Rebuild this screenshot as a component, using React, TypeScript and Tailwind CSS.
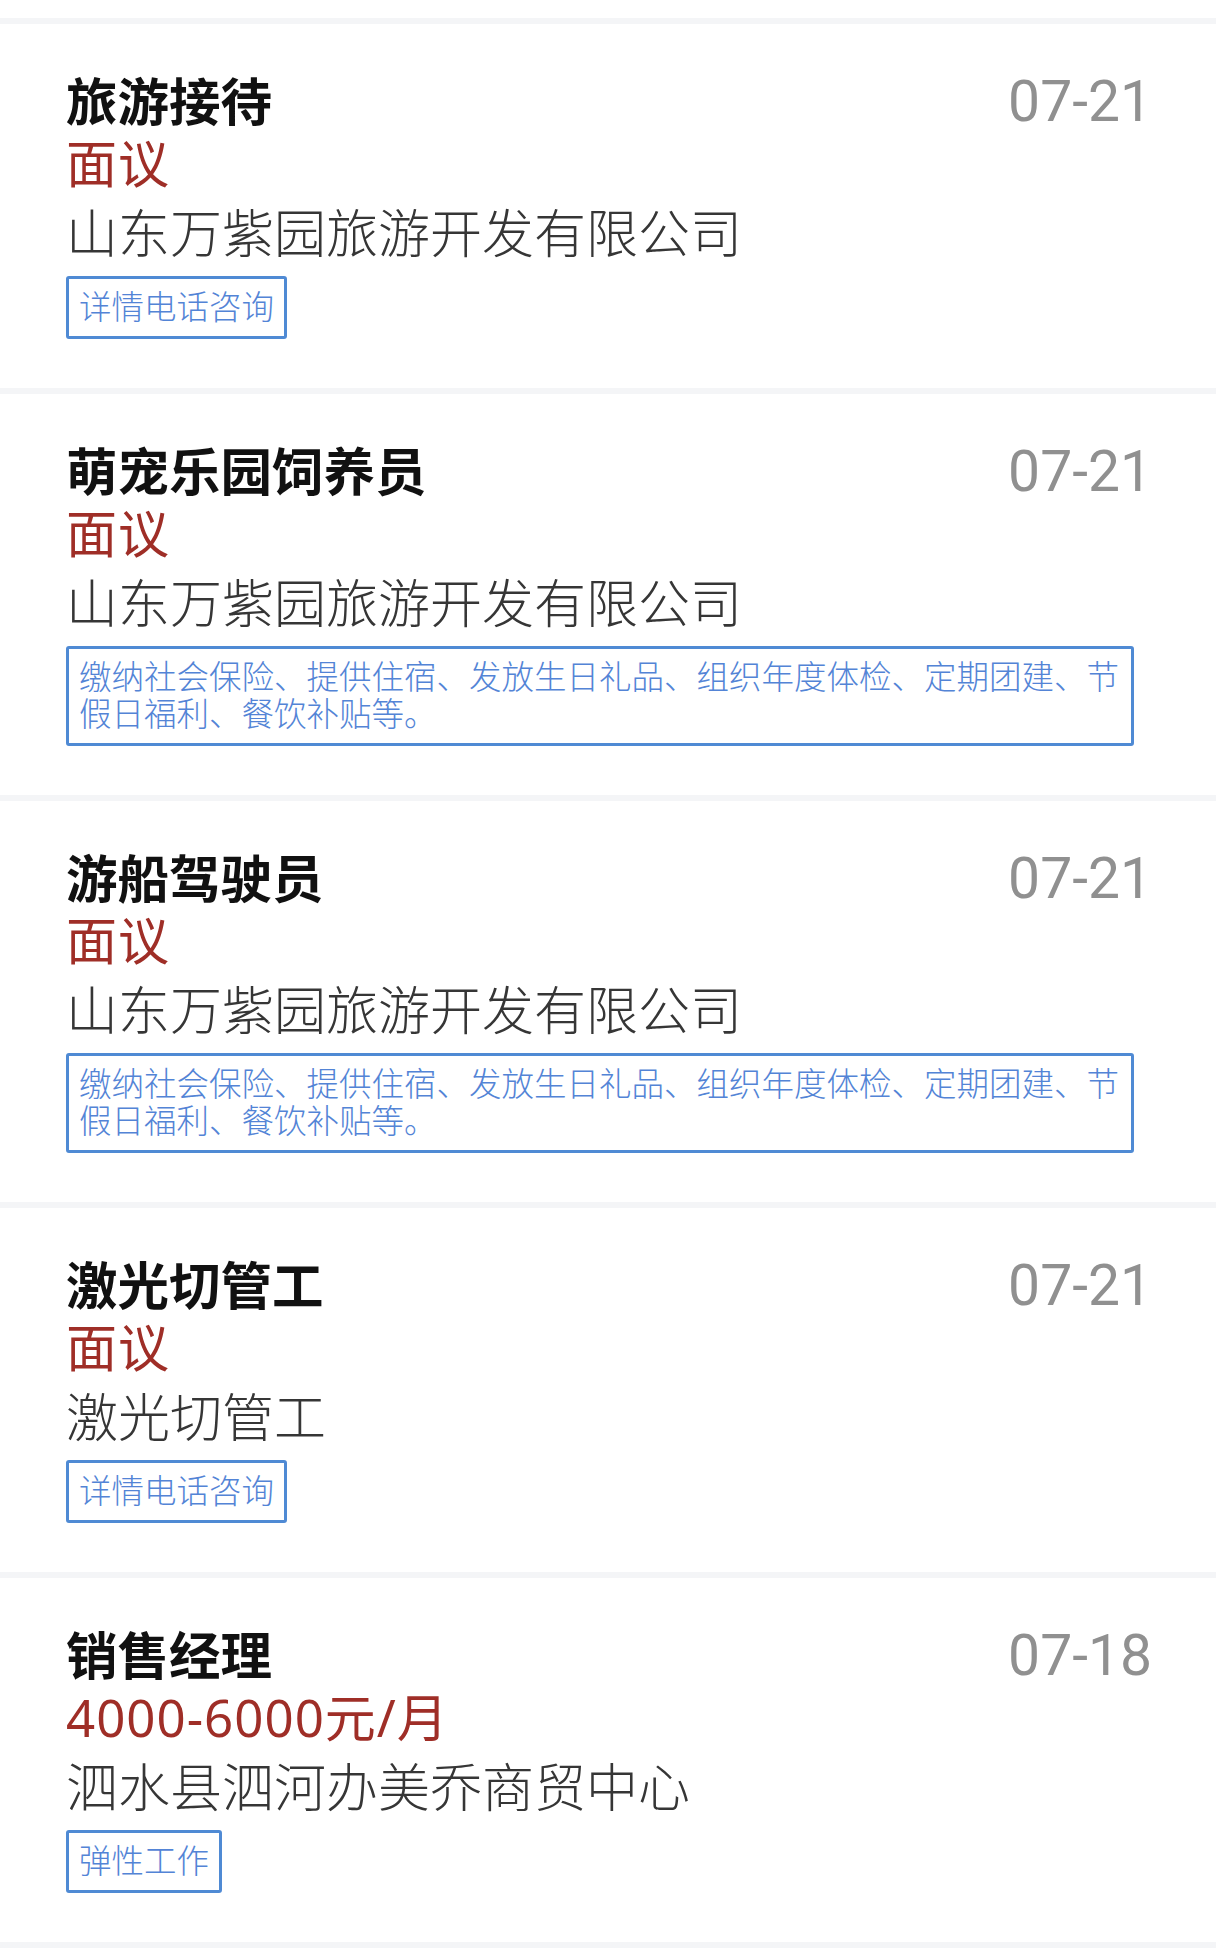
import React from 'react';

interface Job {
  id: number;
  title: string;
  salary: string;
  company: string;
  tag: string;
  date: string;
}

const jobs: Job[] = [
  { id: 1, title: '旅游接待', salary: '面议', company: '山东万紫园旅游开发有限公司', tag: '详情电话咨询', date: '07-21' },
  {
    id: 2,
    title: '萌宠乐园饲养员',
    salary: '面议',
    company: '山东万紫园旅游开发有限公司',
    tag: '缴纳社会保险、提供住宿、发放生日礼品、组织年度体检、定期团建、节假日福利、餐饮补贴等。',
    date: '07-21'
  },
  {
    id: 3,
    title: '游船驾驶员',
    salary: '面议',
    company: '山东万紫园旅游开发有限公司',
    tag: '缴纳社会保险、提供住宿、发放生日礼品、组织年度体检、定期团建、节假日福利、餐饮补贴等。',
    date: '07-21'
  },
  { id: 4, title: '激光切管工', salary: '面议', company: '激光切管工', tag: '详情电话咨询', date: '07-21' },
  { id: 5, title: '销售经理', salary: '4000-6000元/月', company: '泗水县泗河办美乔商贸中心', tag: '弹性工作', date: '07-18' }
];

const cjk = "font-['Noto_Sans','Noto_Sans_CJK_SC',sans-serif]";

const JobCard: React.FC<{ job: Job }> = ({ job }) => (
  <div className="border-t-[6px] border-[#f4f5f7] bg-white pl-[66px] pr-[64px] pt-[46px] pb-[49px]">
    <div className="flex justify-between items-start h-[62px]">
      <h3 className={`${cjk} text-[51.5px] leading-[62px] font-bold text-[#111]`}>{job.title}</h3>
      <span className="font-['Roboto',sans-serif] text-[57px] leading-[64px] text-[#909090]">{job.date}</span>
    </div>
    <div className={`${cjk} text-[51px] leading-[63px] tracking-[1px] text-[#9f2e27]`}>{job.salary}</div>
    <div className={`${cjk} text-[52px] leading-[75px] font-light text-[#363636]`}>{job.company}</div>
    <div className="mt-[6px]">
      <span
        className={`${cjk} inline-block max-w-[1068px] border-[3px] border-[#4f8ad4] rounded-[3px] px-[10px] pt-[9px] pb-[11px] text-[32.5px] leading-[37px] font-light text-[#5384d6]`}
      >
        {job.tag}
      </span>
    </div>
  </div>
);

export default function App() {
  return (
    <div className="w-[1216px] min-h-[1957px] bg-white pt-[18px]">
      {jobs.map((job) => (
        <JobCard key={job.id} job={job} />
      ))}
      <div className="h-[6px] bg-[#f4f5f7]" />
    </div>
  );
}
